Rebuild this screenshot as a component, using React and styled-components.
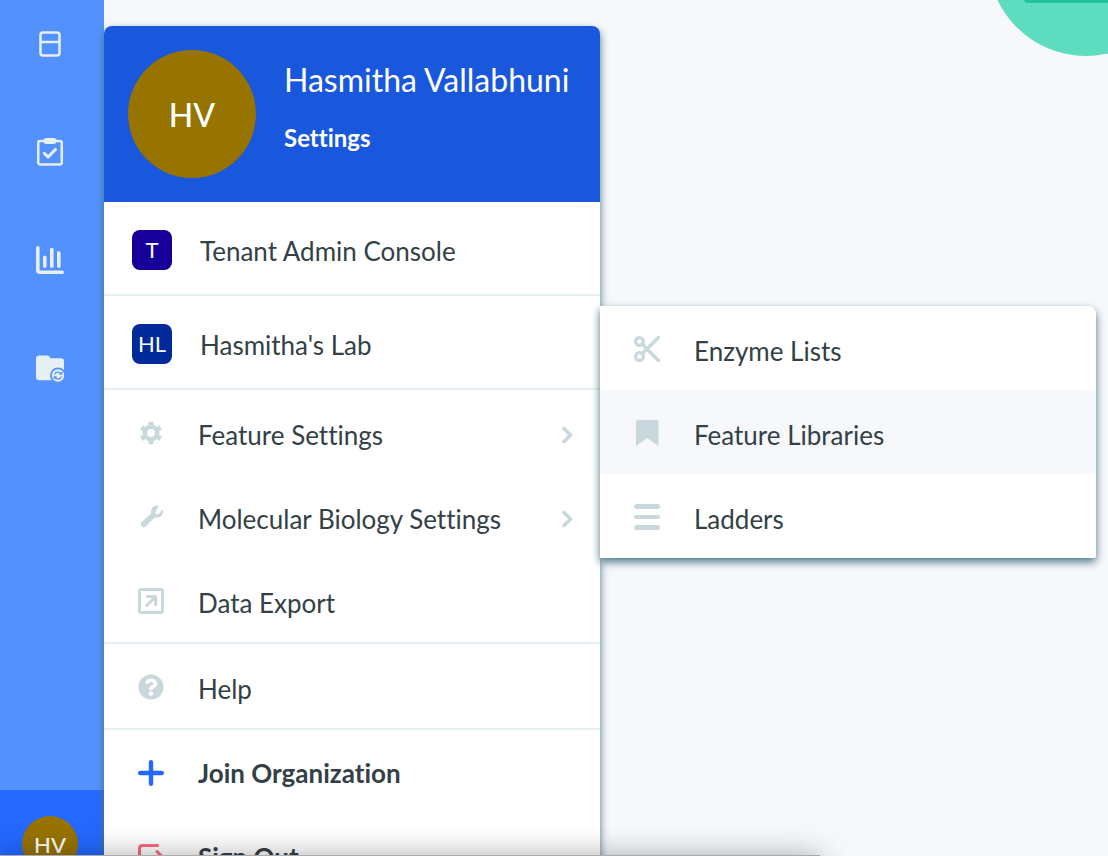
import styled, { createGlobalStyle } from 'styled-components';
import { FaQuestionCircle } from 'react-icons/fa';

const GlobalStyle = createGlobalStyle`
  * {
    box-sizing: border-box;
  }
  body {
    margin: 0;
    background: #f6f8fb;
    color: #334146;
    font-family: Lato, 'Liberation Sans', sans-serif;
    font-variant-ligatures: none;
  }
  button {
    border: 0;
    padding: 0;
    background: none;
    color: inherit;
    font: inherit;
    font-variant-ligatures: none;
    text-align: left;
    cursor: pointer;
  }
`;

const sidebarItems = [
  { label: 'Notebook', Icon: NotebookIcon },
  { label: 'Tasks', Icon: TasksIcon },
  { label: 'Reports', Icon: ChartIcon },
  { label: 'Files', Icon: FolderIcon },
];

const workspaces = [
  { initials: 'T', name: 'Tenant Admin Console', color: '#160099' },
  { initials: 'HL', name: "Hasmitha's Lab", color: '#002a9a' },
];

const featureItems = [
  { name: 'Enzyme Lists', Icon: ScissorsIcon },
  { name: 'Feature Libraries', Icon: BookmarkIcon, active: true },
  { name: 'Ladders', Icon: LadderIcon },
];

function App() {
  return (
    <Page>
      <GlobalStyle />
      <Sidebar>
        <Nav>
          {sidebarItems.map(({ label, Icon }) => (
            <NavButton key={label} aria-label={label}>
              <Icon />
            </NavButton>
          ))}
        </Nav>
        <UserButton>
          <Avatar $size={56} $font={22}>
            HV
          </Avatar>
        </UserButton>
      </Sidebar>

      <Main>
        <Menu>
          <MenuHeader>
            <Avatar $size={128} $font={32}>
              HV
            </Avatar>
            <Profile>
              <UserName>Hasmitha Vallabhuni</UserName>
              <SettingsLink href="#settings">Settings</SettingsLink>
            </Profile>
          </MenuHeader>

          {workspaces.map(({ initials, name, color }) => (
            <Group key={name}>
              <WorkspaceItem>
                <Badge $color={color}>{initials}</Badge>
                <WorkspaceName>{name}</WorkspaceName>
              </WorkspaceItem>
            </Group>
          ))}

          <Group>
            <SubMenuAnchor>
              <Item icon={<GearIcon />} arrow>
                Feature Settings
              </Item>
              <SubMenu>
                {featureItems.map(({ name, Icon, active }) => (
                  <Item key={name} icon={<Icon />} active={active}>
                    {name}
                  </Item>
                ))}
              </SubMenu>
            </SubMenuAnchor>
            <Item icon={<WrenchIcon />} arrow>
              Molecular Biology Settings
            </Item>
            <Item icon={<ExportIcon />}>Data Export</Item>
          </Group>

          <Group>
            <Item icon={<FaQuestionCircle size={26} />}>Help</Item>
          </Group>

          <Item icon={<PlusIcon />} iconColor="#2468ff" bold>
            Join Organization
          </Item>
          <Item icon={<SignOutIcon />} iconColor="#fb6b7c" bold>
            Sign Out
          </Item>
        </Menu>
      </Main>

      <HelpBubble>
        <HelpTab />
      </HelpBubble>
      <BottomPanel />
    </Page>
  );
}

function Item({ icon, iconColor, arrow, bold, active, children }) {
  return (
    <MenuItem $active={active}>
      <IconSlot $color={iconColor}>{icon}</IconSlot>
      <ItemLabel $bold={bold}>
        {children}
        {arrow && <ChevronIcon />}
      </ItemLabel>
    </MenuItem>
  );
}

function NotebookIcon() {
  return (
    <svg width="28" height="28" fill="none" stroke="currentColor" strokeWidth="2.5">
      <rect x="4.5" y="2.5" width="19" height="23" rx="2.5" />
      <path d="M4.5 12h19" />
    </svg>
  );
}

function TasksIcon() {
  return (
    <svg width="28" height="28" fill="none" stroke="currentColor" strokeWidth="2.5">
      <rect x="2.25" y="3" width="23.5" height="23.5" rx="2" />
      <rect x="7.5" y="0" width="13" height="6" rx="3" fill="currentColor" stroke="none" />
      <path d="m8.3 15.3 3.7 3.7 7.5-7.6" strokeWidth="3" strokeLinecap="round" strokeLinejoin="round" />
    </svg>
  );
}

function ChartIcon() {
  return (
    <svg width="28" height="28" fill="none" stroke="currentColor" strokeWidth="3.6" strokeLinecap="round">
      <path d="M1.8 1.8v22.4q0 2 2 2h22.4M8.8 11.3v9M15.8 3.5v16.8M22.8 6.8v13.5" />
    </svg>
  );
}

function FolderIcon() {
  return (
    <svg width="28" height="28" fill="currentColor">
      <path d="M3 1.5h8.5q1.3 0 2 1.2l1 1.6H25q3 0 3 3v16q0 3-3 3H3q-3 0-3-3V4.5q0-3 3-3Z" />
      <circle cx="22" cy="21.5" r="8" fill="#5391ff" />
      <circle cx="22" cy="21.5" r="6.2" />
      <g fill="none" stroke="#5391ff" strokeWidth="1.3">
        <path d="M18.5 20.7a3.6 3.6 0 0 1 6.5-1M25.5 22.3a3.6 3.6 0 0 1-6.5 1" />
        <path d="M25.7 18v2.2h-2.3M18.3 25v-2.2h2.3" />
      </g>
    </svg>
  );
}

function GearIcon() {
  return (
    <svg width="26" height="26" fill="none" stroke="currentColor">
      <circle cx="13" cy="13" r="6.200" strokeWidth="4.600" />
      {[0, 60, 120, 180, 240, 300].map((angle) => (
        <path key={angle} d="M13 2.800v3.200" strokeWidth="4.800" strokeLinejoin="round" transform={`rotate(${angle} 13 13)`} />
      ))}
      {[0, 60, 120, 180, 240, 300].map((angle) => (
        <path key={angle} d="M11 2.500h4" strokeWidth="1.400" strokeLinecap="round" transform={`rotate(${angle} 13 13)`} />
      ))}
    </svg>
  );
}

function WrenchIcon() {
  return (
    <svg width="26" height="26" fill="currentColor">
      <path d="M19.8 1.6C15.500.9 12.2 4.5 13.3 9.2L3.7 17.900a3 3 0 1 0 4.300 4.300l8.700-8.600c4.800 1.100 9.100-2.500 8.400-7.300-.1-.5-.6-.5-.9-.2l-3.300 3.600c-1 .9-2 .8-2.800.1-.8-.8-.8-1.700.1-2.700l2.100-4.500c.3-.500.1-.900-.500-1Z" />
    </svg>
  );
}

function ExportIcon() {
  return (
    <svg width="26" height="26" fill="none" stroke="currentColor" strokeWidth="3" strokeLinejoin="round">
      <rect x="1.5" y="1.5" width="23" height="23" rx="1.5" />
      <path d="M9.5 8.5h8.200v8.200M17 9.200l-8.300 8.300" strokeLinecap="round" />
    </svg>
  );
}

function PlusIcon() {
  return (
    <svg width="26" height="26" stroke="currentColor" strokeWidth="4.400" strokeLinecap="round">
      <path d="M13 2.200v21.600M2.200 13h21.600" />
    </svg>
  );
}

function SignOutIcon() {
  return (
    <svg width="26" height="26" fill="none" stroke="currentColor" strokeWidth="3" strokeLinecap="round" strokeLinejoin="round">
      <path d="M19.5 1.5H4.500q-3 0-3 3v17q0 3 3 3h15M11 12.500h13M19 7.500l5 5-5 5" />
    </svg>
  );
}

function ScissorsIcon() {
  return (
    <svg width="26" height="26" fill="none" stroke="currentColor" strokeWidth="3.200" strokeLinecap="round">
      <circle cx="5.500" cy="5.500" r="3.900" />
      <circle cx="5.500" cy="20.500" r="3.900" />
      <path d="M8.500 17.500l16-16M8.500 8.500l16 16" />
    </svg>
  );
}

function BookmarkIcon() {
  return (
    <svg width="26" height="26" fill="currentColor">
      <path d="M4 0h18.500q2 0 2 2v24L13.200 18 2 26V2q0-2 2-2Z" />
    </svg>
  );
}

function LadderIcon() {
  return (
    <svg width="26" height="26" fill="currentColor">
      <rect width="26" height="5" rx="2.500" />
      <rect y="11" width="26" height="4" rx="2" />
      <rect y="21" width="26" height="5" rx="2.500" />
    </svg>
  );
}

function ChevronIcon() {
  return (
    <svg width="12" height="18" fill="none" stroke="#c8d8dc" strokeWidth="3.600" strokeLinecap="round">
      <path d="M2 2.500 8.500 9 2 15.500" />
    </svg>
  );
}

const Page = styled.div`
  position: relative;
  display: flex;
  height: 100vh;
  overflow: hidden;
`;
const Sidebar = styled.aside`
  flex: 0 0 104px;
  display: flex;
  flex-direction: column;
  background: #5391ff;
`;
const Nav = styled.nav`
  flex: 1;
  display: flex;
  flex-direction: column;
  gap: 20px;
`;
const NavButton = styled.button`
  display: flex;
  align-items: center;
  height: 88px;
  padding-left: 36px;
  color: #e6f0f3;
`;
const UserButton = styled.button`
  display: flex;
  align-items: flex-start;
  height: 66px;
  padding: 26px 0 0 22px;
  overflow: hidden;
  background: #2468ff;
`;
const Avatar = styled.span`
  flex: none;
  display: flex;
  align-items: center;
  justify-content: center;
  width: ${({ $size }) => $size}px;
  height: ${({ $size }) => $size}px;
  border-radius: 50%;
  background: #977300;
  color: #fff;
  font-size: ${({ $font }) => $font}px;
  font-weight: 500;
`;
const Main = styled.main`
  flex: 1;
  padding-top: 26px;
`;
const Menu = styled.section`
  position: relative;
  width: 496px;
  border-radius: 8px;
  background: #fff;
  box-shadow: 0 4px 8px #4a7680;
`;
const MenuHeader = styled.header`
  display: flex;
  gap: 28px;
  padding: 24px;
  border-radius: 8px 8px 0 0;
  background: #1957dc;
  color: #fff;
`;
const Profile = styled.div`
  display: flex;
  flex-direction: column;
  gap: 24px;
  padding-top: 10px;
  white-space: nowrap;
`;
const UserName = styled.h1`
  margin: 0;
  font-size: 32px;
  font-weight: 400;
  line-height: 40px;
`;
const SettingsLink = styled.a`
  color: #fff;
  font-size: 24px;
  font-weight: 700;
  line-height: 28px;
  text-decoration: none;
`;
const Group = styled.div`
  border-bottom: 2px solid #e6f0f3;
`;
const WorkspaceItem = styled.button`
  display: flex;
  align-items: center;
  gap: 28px;
  width: 100%;
  height: 92px;
  padding: 4px 28px 0;
`;
const WorkspaceName = styled.span`
  padding-top: 2px;
  font-size: 26px;
`;
const Badge = styled.span`
  display: flex;
  align-items: center;
  justify-content: center;
  width: 40px;
  height: 40px;
  border-radius: 8px;
  background: ${({ $color }) => $color};
  color: #fff;
  font-size: 22px;
  line-height: 24px;
`;
const SubMenuAnchor = styled.div`
  position: relative;
`;
const SubMenu = styled.div`
  position: absolute;
  top: -84px;
  left: 100%;
  width: 100%;
  border-radius: 0 8px 2px 0;
  background: #fff;
  box-shadow: 0 4px 8px #4a7680;
`;
const MenuItem = styled.button`
  display: flex;
  align-items: center;
  gap: 34px;
  width: 100%;
  height: 84px;
  padding: 2px 26px 0 34px;
  background: ${({ $active }) => ($active ? '#f6f8fb' : 'transparent')};
`;
const IconSlot = styled.span`
  display: flex;
  color: ${({ $color }) => $color || '#c8d8dc'};
`;
const ItemLabel = styled.span`
  flex: 1;
  display: flex;
  align-items: center;
  justify-content: space-between;
  padding-top: ${({ $bold }) => ($bold ? 0 : 4)}px;
  font-size: 26px;
  font-weight: ${({ $bold }) => ($bold ? 700 : 400)};
`;
const HelpBubble = styled.div`
  position: absolute;
  top: -140px;
  right: -76px;
  display: flex;
  align-items: flex-end;
  justify-content: flex-end;
  width: 196px;
  height: 196px;
  padding-bottom: 53px;
  border-radius: 50%;
  background: #5ddcc0;
`;
const HelpTab = styled.div`
  width: 160px;
  height: 40px;
  border-radius: 4px;
  background: #1fc29c;
`;
const BottomPanel = styled.div`
  position: absolute;
  top: calc(100% - 1px);
  left: 0;
  width: 74%;
  height: 40px;
  background: #a9abad;
  box-shadow: 0 4px 32px rgba(0, 0, 0, 0.4);
`;

export default App;
